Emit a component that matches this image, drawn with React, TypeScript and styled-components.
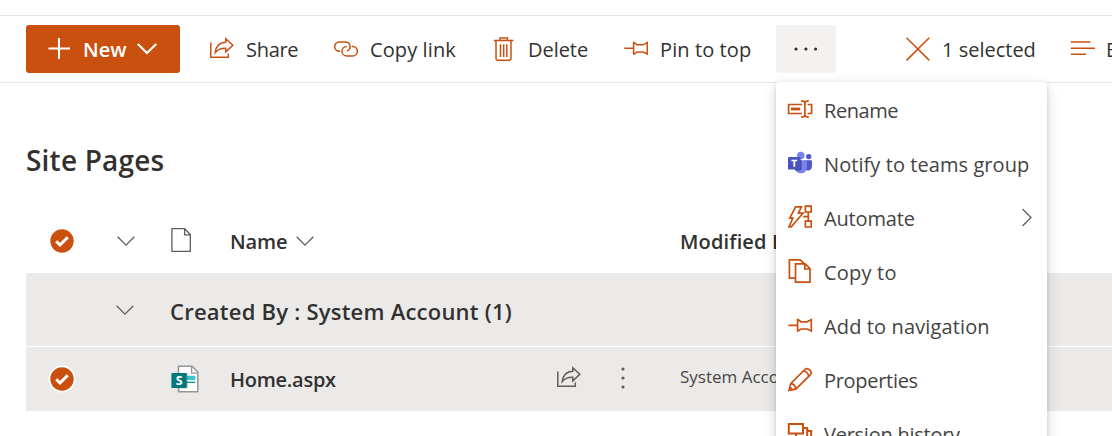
import React from 'react';
import styled, { createGlobalStyle } from 'styled-components';

const ACCENT = '#ca5010';

const GlobalStyle = createGlobalStyle`
  * { box-sizing: border-box; }
  html, body { margin: 0; height: 100%; overflow: hidden; }
  body {
    background: #fff;
    color: #323130;
    font-family: "Open Sans", "Noto Sans", sans-serif;
    font-size: 20px;
  }
`;

const Page = styled.div`
  width: 1112px;
  height: 436px;
  overflow: hidden;
  padding-top: 15px;
  background: #fff;
`;

const Toolbar = styled.header`
  position: relative;
  display: flex;
  align-items: center;
  height: 68px;
  padding-left: 26px;
  border-top: 1px solid #e8e7e6;
  border-bottom: 1px solid #e8e7e6;
`;

const Label = styled.span<{ $track?: number }>`
  white-space: nowrap;
  letter-spacing: ${(p) => p.$track ?? 0}px;
`;

const NewButton = styled.button`
  display: flex;
  align-items: center;
  flex: none;
  width: 154px;
  height: 48px;
  margin-right: 30px;
  padding: 0 0 0 22px;
  border: 0;
  border-radius: 3px;
  background: ${ACCENT};
  color: #fff;
  font: 600 20px "Open Sans", sans-serif;

  ${Label} { width: 54px; margin-left: 13px; text-align: left; }
`;

const Command = styled.button<{ $width: number }>`
  display: flex;
  align-items: center;
  gap: 12px;
  flex: none;
  width: ${(p) => p.$width}px;
  height: 48px;
  padding: 0;
  border: 0;
  background: none;
  color: #323130;
  font: 400 20px "Open Sans", sans-serif;
`;

const MoreButton = styled.button`
  display: flex;
  align-items: center;
  justify-content: center;
  flex: none;
  width: 60px;
  height: 48px;
  margin-right: 70px;
  padding: 0;
  border: 0;
  border-radius: 3px;
  background: #f3f2f1;
`;

const Icon = styled.svg`
  flex: none;
  display: block;
  overflow: visible;
  fill: none;
  stroke: ${ACCENT};
  stroke-width: 1.5;
`;

const Menu = styled.ul`
  position: absolute;
  top: 66px;
  left: 776px;
  z-index: 2;
  width: 271px;
  margin: 0;
  padding: 1px 0 0;
  list-style: none;
  background: #fff;
  border-radius: 3px;
  box-shadow: 0 5px 14px rgba(0, 0, 0, 0.16), 0 1px 4px rgba(0, 0, 0, 0.12);
`;

const MenuItem = styled.li`
  display: flex;
  align-items: center;
  gap: 12px;
  height: 54px;
  padding: 0 15px 0 12px;
  color: #444342;

  ${Label} { flex: 1; }
  ${Icon} { stroke-width: 1.7; }
`;

const Title = styled.h1`
  margin: 58px 0 0 26px;
  font-size: 28px;
  font-weight: 600;
  line-height: 38px;
  color: #323130;
`;

const List = styled.section`
  margin: 30px 0 0 26px;
`;

const Row = styled.div<{ $height: number; $shaded?: boolean }>`
  display: grid;
  grid-template-columns: 72px 72px 60px 450px 1fr;
  align-items: center;
  height: ${(p) => p.$height}px;
  background: ${(p) => (p.$shaded ? '#ebeae8' : '#fff')};
  font-weight: 600;
`;

const ItemRow = styled(Row)`
  margin-top: 1px;
`;

const Cell = styled.div<{ $indent?: number; $gap?: number; $lift?: number }>`
  display: flex;
  align-items: center;
  gap: ${(p) => p.$gap ?? 0}px;
  padding-left: ${(p) => p.$indent ?? 0}px;
  padding-bottom: ${(p) => p.$lift ?? 0}px;
`;

const HeaderLabel = styled(Label)`
  padding-top: 1px;
`;

const GroupName = styled.div`
  grid-column: 3 / -1;
  padding-top: 3px;
  font-size: 22px;
`;

const FileName = styled.span`
  width: 327px;
  padding-top: 3px;
`;

const Author = styled.span`
  font-size: 17px;
  font-weight: 400;
  color: #484644;
  white-space: nowrap;
`;

const Chevron = ({ color = '#605e5c', width = 1.3, size = 18 }: { color?: string; width?: number; size?: number }) => (
  <Icon width={size} height={(size * 10) / 18} viewBox="0 0 18 10" style={{ stroke: color, strokeWidth: width }}>
    <path d="M.7 .8 9 9.1 17.3 .8" />
  </Icon>
);

const ShareIcon = ({ color = ACCENT }: { color?: string }) => (
  <Icon width="24" height="24" viewBox="0 0 24 24" style={{ stroke: color }}>
    <path d="M.8 5.5V20.2H18.3V16.5" />
    <path d="M15.8 1.8 22.8 8.3 15.8 14.9V11.2C11 11 7.6 12.5 5.2 15.6 5.6 9.4 9.8 5.3 15.8 5.2Z" />
  </Icon>
);

const LinkIcon = () => (
  <Icon width="24" height="24" viewBox="0 0 24 24">
    <path d="M6.2 14.3H5.4A4.7 4.7 0 0 1 5.4 4.9H11.4A4.7 4.7 0 0 1 13 14" />
    <path d="M17.6 9.4H18.6A4.8 4.8 0 0 1 18.6 19H12.8A4.8 4.8 0 0 1 12.8 9.4" />
  </Icon>
);

const DeleteIcon = () => (
  <Icon width="24" height="24" viewBox="0 0 24 24">
    <path d="M1.8 3.6H21.4M8 3.5V1H15.4V3.5M4 3.6V22L5.2 23.2H17.8L19 22V3.6M8.5 7.2V20M11.7 7.2V20M14.8 7.2V20" />
  </Icon>
);

const PinIcon = () => (
  <Icon width="24" height="24" viewBox="0 0 24 24">
    <path d="M.3 11.3H9.6M9.6 4.8V17.8M9.6 5.2 13 7.8H19.2L23.3 5.6V17L19.2 15H13L9.6 17.4" />
  </Icon>
);

const ClearIcon = () => (
  <Icon width="24" height="24" viewBox="0 0 24 24">
    <path d="M.5 .8 23.3 23.4M23.3 .8 .5 23.4" />
  </Icon>
);

const LinesIcon = () => (
  <Icon width="24" height="24" viewBox="0 0 24 24">
    <path d="M.8 5H20.4M.8 11.2H25M.8 17.2H16" />
  </Icon>
);

const RenameIcon = () => (
  <Icon width="24" height="24" viewBox="0 0 24 24">
    <path d="M14 6.5H.6V15.5H14M19.6 6.5H23.6V15.5H19.6M13 2.8C15 2.8 16.9 3.2 16.9 5V17C16.9 18.8 15 19.2 13 19.2M20.8 2.8C18.8 2.8 16.9 3.2 16.9 5M20.8 19.2C18.8 19.2 16.9 18.8 16.9 17" />
    <path d="M3 9.6H12.2V12.4H3Z" fill={ACCENT} stroke="none" />
  </Icon>
);

const TeamsIcon = () => (
  <Icon width="24" height="24" viewBox="0 0 24 24" style={{ stroke: 'none' }}>
    <circle cx="20.7" cy="4.6" r="2.7" fill="#5059c9" />
    <path d="M17 8.2H23Q24 8.2 24 9.2V14.5A4.2 4.2 0 0 1 17 17.5Z" fill="#5059c9" />
    <circle cx="12.8" cy="3.5" r="3.8" fill="#7b83eb" />
    <path d="M7 8.2H17.8Q19 8.2 19 9.4V15.8A6.2 6.7 0 0 1 6.8 15.8Z" fill="#7b83eb" />
    <path d="M7 8.2H13.5V16.5Q13.5 18.5 11.5 18.5H7.2Q6.8 17 7 14Z" fill="#3f489f" />
    <rect x="0" y="5" width="12.6" height="12.6" rx="1.2" fill="#4b53bc" />
    <path d="M3.4 7.7H9.2V9.3H7.2V14.8H5.4V9.3H3.4Z" fill="#fff" />
  </Icon>
);

const AutomateIcon = () => (
  <Icon width="24" height="24" viewBox="0 0 24 24">
    <path d="M7.6 .8H13.4L10.4 7.2H15L3.2 20.8H1L4.8 12.2H1.8Z" />
    <path d="M17.4 .2H23.2V6H17.4ZM17.4 15.2H23.2V21H17.4ZM20.3 6V15.2M15.2 10.6H20.3" />
  </Icon>
);

const CopyIcon = () => (
  <Icon width="24" height="24" viewBox="0 0 24 24">
    <path d="M7.5 18.2H1.4V-.2H12.2L16.6 3.8" />
    <path d="M7.5 3.8H17.2L22 8.7V22.2H7.5ZM16.8 3.8V9H22" />
  </Icon>
);

const PencilIcon = () => (
  <Icon width="24" height="24" viewBox="0 0 24 24">
    <path d="M1 22.4 2.7 15.6 16.8 1.5C19.7 -1.2 25.2 3.4 22 7.2L7.8 21.1ZM2.7 15.6C5.6 15.8 7.5 18 7.8 21.1M15.4 3C18 3.3 20.3 5.6 20.6 8.5M1.8 19.5Q3.7 19.9 4 21.7" />
  </Icon>
);

const VersionIcon = () => (
  <Icon width="24" height="24" viewBox="0 0 24 24" style={{ strokeWidth: 2 }}>
    <path d="M.8 2H15V11.5H.8ZM15 6H19.2V16H8V11.5M19.2 9H23.2V20H12V16" />
  </Icon>
);

const CheckIcon = ({ ring }: { ring?: boolean }) => (
  <Icon width="28" height="28" viewBox="0 0 28 28" style={{ stroke: 'none' }}>
    {ring && <circle cx="14" cy="14" r="13.6" fill="#fff" />}
    <circle cx="14" cy="14" r="11.7" fill={ACCENT} />
    <path d="M8.2 14.2 12 18 19.8 10.3" stroke="#fff" strokeWidth="3" />
  </Icon>
);

const DocumentIcon = () => (
  <Icon width="20" height="24" viewBox="0 0 20 24" style={{ stroke: '#605e5c', strokeWidth: 1.3 }}>
    <path d="M.9 .7H13.7L19.3 6.6V23.3H.9ZM13.6 .7V6.8H19.3" />
  </Icon>
);

const PageFileIcon = () => (
  <Icon width="28" height="28" viewBox="0 0 28 28" style={{ stroke: 'none' }}>
    <path d="M7.5 1.2H21L26.8 7V26.8H7.5Z" fill="#fff" stroke="#979593" strokeWidth="1.5" />
    <path d="M20.6 1.2V8.2H26.8" stroke="#979593" strokeWidth="1.3" />
    <rect x="16" y="10.8" width="8.4" height="4.3" rx=".8" fill="#37c6d0" />
    <rect x="16" y="16.6" width="8.4" height="1.5" fill="#1a9ba1" />
    <rect x="7" y="8" width="10" height="15.6" fill="#000" opacity=".15" />
    <rect x=".4" y="8" width="15.4" height="15" rx=".8" fill="#03787c" />
    <text x="8.1" y="20" textAnchor="middle" fontSize="12.5" fontWeight="700" fill="#fff">S</text>
  </Icon>
);

const commands = [
  { label: 'Share', icon: <ShareIcon />, width: 124, track: -0.3 },
  { label: 'Copy link', icon: <LinkIcon />, width: 158, track: 0.1 },
  { label: 'Delete', icon: <DeleteIcon />, width: 132, track: -0.05 },
  { label: 'Pin to top', icon: <PinIcon />, width: 152, track: 0.1 },
];

const menuItems = [
  { label: 'Rename', icon: <RenameIcon />, track: -0.45 },
  { label: 'Notify to teams group', icon: <TeamsIcon />, track: 0.07 },
  { label: 'Automate', icon: <AutomateIcon />, track: -0.15, submenu: true },
  { label: 'Copy to', icon: <CopyIcon />, track: 0.2 },
  { label: 'Add to navigation', icon: <PinIcon />, track: 0.13 },
  { label: 'Properties', icon: <PencilIcon />, track: -0.3 },
  { label: 'Version history', icon: <VersionIcon />, track: -0.25 },
];

export default function App() {
  return (
    <Page>
      <GlobalStyle />
      <Toolbar>
        <NewButton>
          <Icon width="22" height="22" viewBox="0 0 22 22" style={{ stroke: '#fff', strokeWidth: 2 }}>
            <path d="M11 0V21M.5 10.5H22" />
          </Icon>
          <Label>New</Label>
          <Chevron color="#fff" width={1.9} size={20} />
        </NewButton>
        {commands.map((c) => (
          <Command key={c.label} $width={c.width}>
            {c.icon}
            <Label $track={c.track}>{c.label}</Label>
          </Command>
        ))}
        <MoreButton>
          <Icon width="24" height="4" viewBox="0 0 24 4" style={{ fill: '#323130', stroke: 'none' }}>
            <circle cx="2" cy="2" r="1.6" />
            <circle cx="11.9" cy="2" r="1.6" />
            <circle cx="21.6" cy="2" r="1.6" />
          </Icon>
        </MoreButton>
        <Command $width={164}>
          <ClearIcon />
          <Label>1 selected</Label>
        </Command>
        <Command $width={120}>
          <LinesIcon />
          <Label>By author</Label>
        </Command>
        <Menu>
          {menuItems.map((m) => (
            <MenuItem key={m.label}>
              {m.icon}
              <Label $track={m.track}>{m.label}</Label>
              {m.submenu && (
                <Icon width="10" height="18" viewBox="0 0 10 18" style={{ stroke: '#605e5c', strokeWidth: 1.3 }}>
                  <path d="M.5 0 9 8.5 .5 17" />
                </Icon>
              )}
            </MenuItem>
          ))}
        </Menu>
      </Toolbar>
      <Title><Label $track={0.2}>Site Pages</Label></Title>
      <List>
        <Row $height={64}>
          <Cell $indent={22} $lift={1}><CheckIcon /></Cell>
          <Cell $indent={19}><Chevron /></Cell>
          <Cell $indent={1} $lift={2}><DocumentIcon /></Cell>
          <Cell $gap={9}><HeaderLabel $track={-0.15}>Name</HeaderLabel><Chevron /></Cell>
          <Cell><HeaderLabel $track={0.15}>Modified By</HeaderLabel></Cell>
        </Row>
        <Row $height={73} $shaded>
          <Cell />
          <Cell $indent={18}><Chevron /></Cell>
          <GroupName><Label $track={0.23}>Created By : System Account (1)</Label></GroupName>
        </Row>
        <ItemRow $height={64} $shaded>
          <Cell $indent={22} $lift={1}><CheckIcon ring /></Cell>
          <Cell />
          <Cell $indent={1}><PageFileIcon /></Cell>
          <Cell $lift={2}>
            <FileName><Label $track={-0.25}>Home.aspx</Label></FileName>
            <ShareIcon color="#605e5c" />
            <Icon width="4" height="22" viewBox="0 0 4 22" style={{ fill: '#605e5c', stroke: 'none', marginLeft: 40 }}>
              <circle cx="2" cy="2" r="1.6" />
              <circle cx="2" cy="11" r="1.6" />
              <circle cx="2" cy="20" r="1.6" />
            </Icon>
          </Cell>
          <Cell $lift={5}><Author><Label>System Account</Label></Author></Cell>
        </ItemRow>
      </List>
    </Page>
  );
}
